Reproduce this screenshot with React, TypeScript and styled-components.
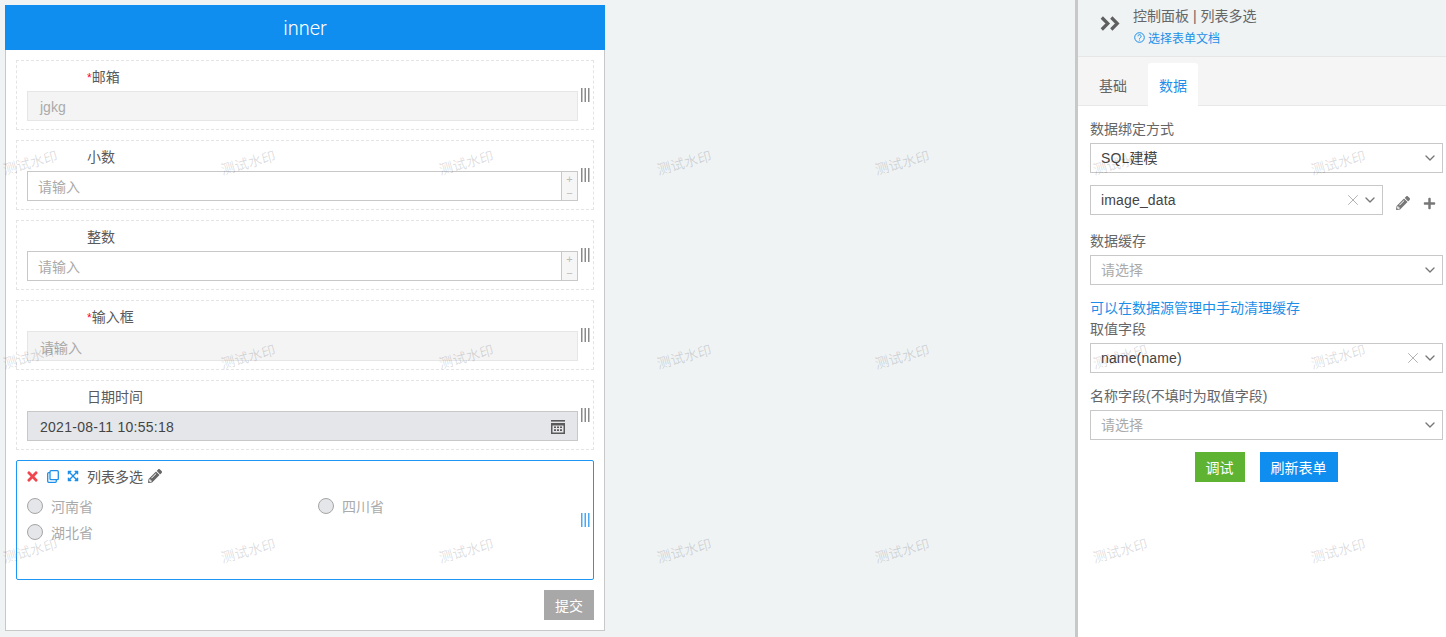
import React from "react";
import styled, { createGlobalStyle } from "styled-components";
import { FaPencilAlt, FaPlus, FaTimes, FaExpandArrowsAlt } from "react-icons/fa";
import { ChevronDown, X } from "lucide-react";

const Global = createGlobalStyle`
  html, body { margin: 0; padding: 0; height: 100%; }
  body { background: #eff3f4; font-family: "Liberation Sans", "Noto Sans CJK SC", sans-serif; font-size: 14px; color: #555; }
  * { box-sizing: border-box; }
`;

const Page = styled.div`
  position: relative; width: 1446px; height: 637px; overflow: hidden;
  display: flex; justify-content: space-between; align-items: flex-start;
`;
const FormPanel = styled.section`
  width: 600px; height: 626px; margin: 5px 0 0 5px; background: #fff; border: 1px solid #c8c8c8; border-top: 0;
  display: flex; flex-direction: column;
`;
const PanelTitle = styled.header`
  height: 45px; margin: 0 -1px; background: #108eef; color: #fff;
  display: flex; align-items: center; justify-content: center;
  font: 300 20px Roboto, "Liberation Sans", sans-serif;
`;
const Fields = styled.div`
  display: flex; flex-direction: column; gap: 10px; padding: 10px 10px 0;
`;
const Item = styled.div<{ $active?: boolean }>`
  height: ${p => (p.$active ? 120 : 70)}px;
  border: 1px ${p => (p.$active ? "solid #1d97f3" : "dashed #e4e4e4")};
  border-radius: ${p => (p.$active ? 2 : 0)}px;
  display: flex; align-items: center;
  padding-left: 10px;
`;
const ItemBody = styled.div<{ $active?: boolean }>`
  width: 551px; align-self: flex-start; padding-top: ${p => (p.$active ? 4 : 5)}px;
`;
const Handle = styled.svg<{ $active?: boolean }>`
  width: 9px; height: 14px; margin-left: 3px; flex: none;
  color: ${p => (p.$active ? "#4aa8f5" : "#8a8a8a")};
`;
const Label = styled.div`
  height: 22px; line-height: 22px; margin: 0 0 3px 60px; color: #5a5a5a; font-size: 14px;
`;
const Star = styled.span`
  color: #f03; font-size: 12px;
`;
const TextBox = styled.div<{ $disabled?: boolean }>`
  height: 30px; display: flex; align-items: center; padding: 2px 0 0 12px; font-size: 14px;
  border: 1px solid ${p => (p.$disabled ? "#e6e6e6" : "#c8c8c8")};
  background: ${p => (p.$disabled ? "#f4f4f4" : "#fff")};
  color: #aaa;
`;
const NumberBox = styled.div`
  height: 30px; display: flex; border: 1px solid #c8c8c8; background: #fff; color: #aaa; padding-left: 10px;
`;
const NumberText = styled.div`
  flex: 1; line-height: 30px;
`;
const Spinner = styled.div`
  width: 16px; background: #f6f6f6; border-left: 1px solid #c8c8c8; color: #bbb;
  display: flex; flex-direction: column; align-items: center; justify-content: center;
  font-size: 11px; line-height: 14px;
`;
const DateBox = styled.div`
  height: 30px; display: flex; align-items: center; justify-content: space-between; padding: 2px 12px 0;
  background: #e4e6ea; border: 1px solid #c8c8c8; color: #444; font-size: 14px; letter-spacing: 0.27px;
`;
const ActiveHead = styled.div`
  height: 22px; display: flex; align-items: center;
`;
const IconSlot = styled.span<{ $w: number; $color: string; $shift?: number }>`
  width: ${p => p.$w}px; margin-left: ${p => p.$shift ?? 0}px; display: flex; align-items: center; color: ${p => p.$color}; flex: none;
`;
const ActiveLabel = styled.span`
  color: #5a5a5a; font-size: 14px; margin-right: 5px;
`;
const Options = styled.div`
  display: grid; grid-template-columns: 291px 260px; grid-auto-rows: 26px; margin-top: 6px;
`;
const Option = styled.label`
  display: flex; align-items: center; gap: 8px; color: #aaa; font-size: 14px;
`;
const Radio = styled.span`
  width: 16px; height: 16px; border-radius: 50%; background: #e4e6ea; border: 1px solid #a5a5a5; flex: none;
`;
const Footer = styled.div`
  display: flex; justify-content: flex-end; padding: 10px 10px 0;
`;
const Submit = styled.button`
  width: 50px; height: 30px; border: 0; background: #a8a8a8; color: #fff; padding: 0;
  font: 14px "Liberation Sans", "Noto Sans CJK SC", sans-serif;
`;

const Side = styled.aside`
  width: 371px; height: 637px; background: #fff; border-left: 3px solid #c8c8c8; display: flex; flex-direction: column;
`;
const SideHead = styled.div`
  height: 57px; background: #eff3f4; border-bottom: 1px solid #e6e6e6; display: flex; align-items: flex-start;
  padding: 5px 0 0 22px;
`;
const HeadIcon = styled.span`
  width: 33px; height: 36px; display: flex; align-items: center; color: #5f5f5f; flex: none;
`;
const HeadText = styled.div`
  display: flex; flex-direction: column;
`;
const HeadTitle = styled.div`
  height: 22px; line-height: 22px; color: #666; font-size: 14px;
`;
const DocLink = styled.div`
  height: 22px; margin-top: -1px; display: flex; align-items: center; gap: 3px; color: #1d8fe8; font-size: 12px; padding-left: 1px;
`;
const TabBar = styled.div`
  height: 49px; background: #f5f5f5; border-bottom: 1px solid #e8e8e8; display: flex; align-items: flex-end; padding-left: 10px;
`;
const Tab = styled.div<{ $active?: boolean }>`
  width: 50px; height: 43px; margin-right: 10px; display: flex; align-items: center; justify-content: center;
  border-radius: 3px 3px 0 0; font-size: 14px;
  background: ${p => (p.$active ? "#fff" : "transparent")};
  color: ${p => (p.$active ? "#1d8fe8" : "#666")};
  margin-bottom: -1px;
`;
const Controls = styled.div`
  padding: 12px 3px 0 12px; display: flex; flex-direction: column;
`;
const CtlLabel = styled.div<{ $top?: number }>`
  height: 22px; line-height: 22px; margin-top: ${p => p.$top ?? 0}px; margin-bottom: 3px; color: #666; font-size: 14px;
`;
const Select = styled.div<{ $width?: number }>`
  width: ${p => (p.$width ? `${p.$width}px` : "100%")};
  height: 30px; border: 1px solid #c8c8c8; background: #fff; padding: 0 4px 0 10px; display: flex; align-items: center; flex: none;
`;
const SelectValue = styled.span<{ $placeholder?: boolean; $raise?: number }>`
  flex: 1; font-size: 14px; margin-top: ${p => -(p.$raise ?? 1)}px;
  letter-spacing: ${p => (p.$placeholder ? 0 : 0.15)}px; color: ${p => (p.$placeholder ? "#aaa" : "#444")};
`;
const ClearIcon = styled(X)`
  color: #999;
`;
const Caret = styled(ChevronDown)`
  color: #777;
`;
const SelectRow = styled.div`
  display: flex; align-items: center; margin-top: 12px;
`;
const ActionIcon = styled.span<{ $left: number }>`
  margin-left: ${p => p.$left}px; display: flex; color: #777; margin-top: 6px;
`;
const Hint = styled.div`
  height: 22px; line-height: 22px; margin-top: 12px; color: #1d8fe8; font-size: 14px;
`;
const Buttons = styled.div`
  display: flex; justify-content: center; gap: 15px; margin-top: 12px; padding-right: 1px;
`;
const ActionButton = styled.button<{ $w: number; $bg: string }>`
  width: ${p => p.$w}px; height: 30px; border: 0; padding: 0; background: ${p => p.$bg}; color: #fff;
  font: 14px "Liberation Sans", "Noto Sans CJK SC", sans-serif;
`;

const Watermarks = styled.div`
  position: absolute; left: -79px; top: 65px; width: 1526px; pointer-events: none;
  display: grid; grid-template-columns: repeat(7, 218px); grid-auto-rows: 194px;
`;
const Mark = styled.div`
  display: flex; align-items: center; justify-content: center;
  color: rgba(0, 0, 0, 0.14); font-size: 14px; transform: rotate(-15deg);
`;

const DragHandle = ({ active }: { active?: boolean }) => (
  <Handle $active={active} viewBox="0 0 9 14">
    <g fill="currentColor">
      <rect x="0" width="1.5" height="14" />
      <rect x="3.5" width="1.5" height="14" />
      <rect x="7" width="1.5" height="14" />
    </g>
  </Handle>
);

const DoubleChevron = () => (
  <svg width="20" height="15" viewBox="0 0 20 15" fill="none" stroke="currentColor" strokeWidth="3.2">
    <path d="M1.8 1.5l6 6-6 6" />
    <path d="M11.3 1.5l6 6-6 6" />
  </svg>
);

const CalendarIcon = () => (
  <svg width="14" height="14" viewBox="0 0 14 14" fill="#5a5a5a">
    <rect x="0" y="0" width="14" height="1.6" />
    <path fillRule="evenodd" d="M0 3h14v11H0zM1.5 5.5v7h11v-7z" />
    <path d="M3 6.5h2v1.6H3zM6 6.5h2v1.6H6zM9 6.5h2v1.6H9zM3 9.3h2v1.6H3zM6 9.3h2v1.6H6zM9 9.3h2v1.6H9z" />
  </svg>
);

const CopyIcon = () => (
  <svg width="12" height="13" viewBox="0 0 12 13" fill="none" stroke="currentColor" strokeWidth="1.3">
    <rect x="3" y="0.7" width="8.3" height="9" rx="1" />
    <path d="M3 2.7H1.7a1 1 0 0 0-1 1v7.6a1 1 0 0 0 1 1h6.6a1 1 0 0 0 1-1V9.7" />
  </svg>
);

const HelpIcon = () => (
  <svg width="11" height="11" viewBox="0 0 11 11" fill="none" stroke="currentColor">
    <circle cx="5.5" cy="5.5" r="4.8" />
    <path d="M3.9 4.3a1.6 1.6 0 1 1 2.4 1.4c-.5.3-.8.5-.8 1.1" />
    <path d="M5.5 7.6v.9" />
  </svg>
);

const fields = [
  { label: "邮箱", required: true, kind: "text", value: "jgkg" },
  { label: "小数", kind: "number" },
  { label: "整数", kind: "number" },
  { label: "输入框", required: true, kind: "text", value: "请输入" },
];

export default function App() {
  return (
    <Page>
      <Global />
      <FormPanel>
        <PanelTitle>inner</PanelTitle>
        <Fields>
          {fields.map(f => (
            <Item key={f.label}>
              <ItemBody>
                <Label>
                  {f.required && <Star>*</Star>}
                  {f.label}
                </Label>
                {f.kind === "text" ? (
                  <TextBox $disabled>{f.value}</TextBox>
                ) : (
                  <NumberBox>
                    <NumberText>请输入</NumberText>
                    <Spinner>
                      <span>+</span>
                      <span>−</span>
                    </Spinner>
                  </NumberBox>
                )}
              </ItemBody>
              <DragHandle />
            </Item>
          ))}
          <Item>
            <ItemBody>
              <Label>日期时间</Label>
              <DateBox>
                2021-08-11 10:55:18
                <CalendarIcon />
              </DateBox>
            </ItemBody>
            <DragHandle />
          </Item>
          <Item $active>
            <ItemBody $active>
              <ActiveHead>
                <IconSlot $w={21} $color="#f0474f" $shift={-2}><FaTimes size={15} /></IconSlot>
                <IconSlot $w={20} $color="#1d8fe8" $shift={1}><CopyIcon /></IconSlot>
                <IconSlot $w={20} $color="#1d8fe8"><FaExpandArrowsAlt size={12} /></IconSlot>
                <ActiveLabel>列表多选</ActiveLabel>
                <IconSlot $w={16} $color="#666"><FaPencilAlt size={14} /></IconSlot>
              </ActiveHead>
              <Options>
                <Option><Radio />河南省</Option>
                <Option><Radio />四川省</Option>
                <Option><Radio />湖北省</Option>
              </Options>
            </ItemBody>
            <DragHandle active />
          </Item>
        </Fields>
        <Footer>
          <Submit>提交</Submit>
        </Footer>
      </FormPanel>

      <Side>
        <SideHead>
          <HeadIcon><DoubleChevron /></HeadIcon>
          <HeadText>
            <HeadTitle>控制面板 | 列表多选</HeadTitle>
            <DocLink><HelpIcon />选择表单文档</DocLink>
          </HeadText>
        </SideHead>
        <TabBar>
          <Tab>基础</Tab>
          <Tab $active>数据</Tab>
        </TabBar>
        <Controls>
          <CtlLabel>数据绑定方式</CtlLabel>
          <Select>
            <SelectValue $raise={2}>SQL建模</SelectValue>
            <Caret size={16} />
          </Select>
          <SelectRow>
            <Select $width={293}>
              <SelectValue>image_data</SelectValue>
              <ClearIcon size={18} strokeWidth={1} />
              <Caret size={16} />
            </Select>
            <ActionIcon $left={13}><FaPencilAlt size={14} /></ActionIcon>
            <ActionIcon $left={13}><FaPlus size={13} /></ActionIcon>
          </SelectRow>
          <CtlLabel $top={15}>数据缓存</CtlLabel>
          <Select>
            <SelectValue $placeholder $raise={3}>请选择</SelectValue>
            <Caret size={16} />
          </Select>
          <Hint>可以在数据源管理中手动清理缓存</Hint>
          <CtlLabel $top={-1}>取值字段</CtlLabel>
          <Select>
            <SelectValue>name(name)</SelectValue>
            <ClearIcon size={18} strokeWidth={1} />
            <Caret size={16} />
          </Select>
          <CtlLabel $top={12}>名称字段(不填时为取值字段)</CtlLabel>
          <Select>
            <SelectValue $placeholder $raise={3}>请选择</SelectValue>
            <Caret size={16} />
          </Select>
          <Buttons>
            <ActionButton $w={50} $bg="#5fb333">调试</ActionButton>
            <ActionButton $w={78} $bg="#108eef">刷新表单</ActionButton>
          </Buttons>
        </Controls>
      </Side>

      <Watermarks>
        {Array.from({ length: 21 }, (_, i) => (
          <Mark key={i}>测试水印</Mark>
        ))}
      </Watermarks>
    </Page>
  );
}
